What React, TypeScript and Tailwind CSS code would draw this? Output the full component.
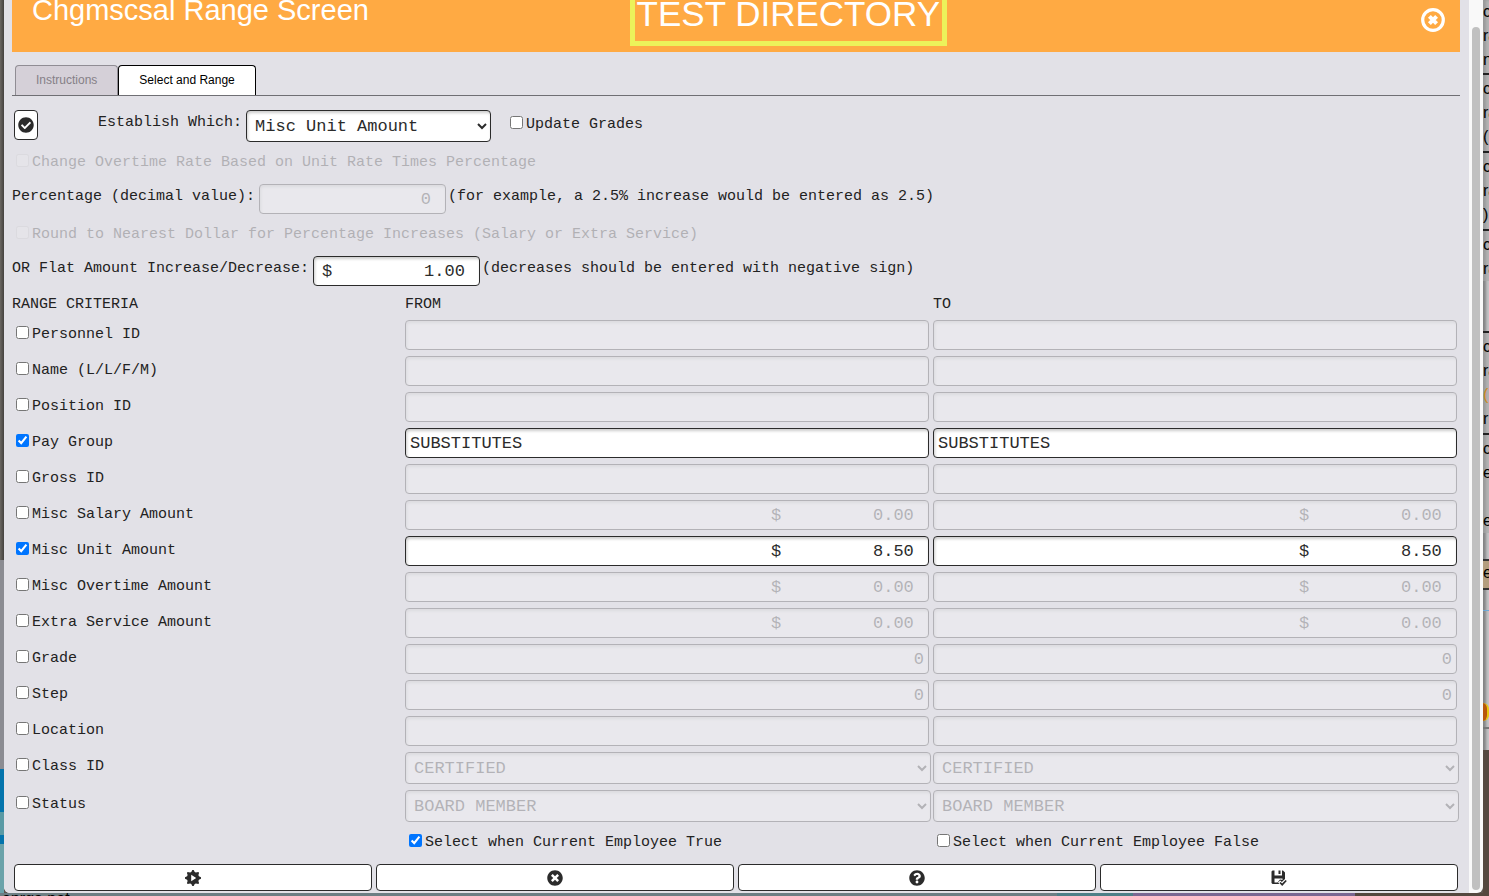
import { useState } from 'react'
import { FaCheckCircle, FaQuestionCircle, FaTimesCircle } from 'react-icons/fa'

type Criterion = {
  id: string
  label: string
  kind: 'text' | 'number' | 'select'
  value: string
  on?: boolean
}

const criteria: Criterion[] = [
  { id: 'personnel', label: 'Personnel ID', kind: 'text', value: '' },
  { id: 'name', label: 'Name (L/L/F/M)', kind: 'text', value: '' },
  { id: 'position', label: 'Position ID', kind: 'text', value: '' },
  { id: 'paygroup', label: 'Pay Group', kind: 'text', value: 'SUBSTITUTES', on: true },
  { id: 'gross', label: 'Gross ID', kind: 'text', value: '' },
  { id: 'salary', label: 'Misc Salary Amount', kind: 'number', value: '$         0.00 ' },
  { id: 'unit', label: 'Misc Unit Amount', kind: 'number', value: '$         8.50 ', on: true },
  { id: 'overtime', label: 'Misc Overtime Amount', kind: 'number', value: '$         0.00 ' },
  { id: 'extra', label: 'Extra Service Amount', kind: 'number', value: '$         0.00 ' },
  { id: 'grade', label: 'Grade', kind: 'number', value: '0' },
  { id: 'step', label: 'Step', kind: 'number', value: '0' },
  { id: 'location', label: 'Location', kind: 'text', value: '' },
  { id: 'class', label: 'Class ID', kind: 'select', value: 'CERTIFIED' },
  { id: 'status', label: 'Status', kind: 'select', value: 'BOARD MEMBER' },
]

const field =
  'block rounded border border-[#2b2b2b] bg-white px-1 text-[17px] text-[#2b2b2b] shadow-[inset_1px_2px_3px_rgba(0,0,0,0.2)] disabled:opacity-25'

function Check({ label, checked = false, disabled = false }: { label: string; checked?: boolean; disabled?: boolean }) {
  return (
    <label className={`flex items-start leading-[30px] ${disabled ? 'opacity-25' : ''}`}>
      <input type="checkbox" defaultChecked={checked} disabled={disabled} className="mt-1.5 mr-[3px] ml-1 size-[13px]" />
      {label}
    </label>
  )
}

function RangeField({ item, side, enabled }: { item: Criterion; side: string; enabled: boolean }) {
  const name = `${item.label} ${side}`

  if (item.kind === 'select') {
    return (
      <div className="pr-0.5">
        <select aria-label={name} disabled={!enabled} className={`${field} h-8 w-full`}>
          <option>{item.value}</option>
        </select>
      </div>
    )
  }

  return (
    <div className="pr-1">
      <input
        type="text"
        aria-label={name}
        defaultValue={item.value}
        disabled={!enabled}
        className={`${field} h-[30px] w-full ${item.kind === 'number' ? 'text-right' : 'text-left'}`}
      />
    </div>
  )
}

function CriterionRow({ item }: { item: Criterion }) {
  const [on, setOn] = useState(!!item.on)

  return (
    <tr className={item.kind === 'select' ? 'h-[38px]' : 'h-9'}>
      <td className="align-top">
        <label className="flex items-start leading-[30px]">
          <input
            type="checkbox"
            checked={on}
            onChange={(e) => setOn(e.target.checked)}
            className="mt-1.5 mr-[3px] ml-1 size-[13px]"
          />
          {item.label}
        </label>
      </td>
      <td className="align-top">
        <RangeField item={item} side="from" enabled={on} />
      </td>
      <td className="align-top">
        <RangeField item={item} side="to" enabled={on} />
      </td>
    </tr>
  )
}

function CloseIcon() {
  return (
    <svg viewBox="0 0 24 24" className="size-6" fill="none" stroke="currentColor">
      <circle cx="12" cy="12" r="10.3" strokeWidth="3.2" />
      <path d="M8.4 8.4l7.2 7.2M15.6 8.4l-7.2 7.2" strokeWidth="4" />
    </svg>
  )
}

function GearPlayIcon() {
  return (
    <svg viewBox="0 0 16 16" className="size-4" fill="currentColor">
      <path
        fillRule="evenodd"
        d="M7.300 0h1.400l1 2.100 1.200.5 2.300-.7.900.9-.7 2.300.5 1.200L16 7.300v1.400l-2.100 1-.5 1.200.7 2.300-.9.900-2.300-.7-1.200.5L8.700 16H7.300l-1-2.100-1.200-.5-2.300.7-.9-.9.7-2.300-.5-1.200L0 8.700V7.300l2.100-1 .5-1.200-.7-2.300.9-.9 2.300.7 1.200-.5zM6.200 4.800v6.400l5-3.200z"
      />
    </svg>
  )
}

function SaveCheckIcon() {
  return (
    <svg viewBox="0 0 16 16" className="size-4" fill="currentColor">
      <path
        fillRule="evenodd"
        d="M1.500 .5H3.500V5.500H11V.5h1L14 2.500V9l-3.200 3-1.600-1.500L7 12.500 8.500 14H1.500L.5 13V1.500zM3.500 8.500V12.500H6.500L9 9.500 11.500 10V8.500z"
      />
      <path d="M7.500 .5h2v3.500h-2z" />
      <path d="M9 12.500l2.200 2.200 4-4.200" fill="none" stroke="currentColor" strokeWidth="1.700" />
    </svg>
  )
}

const actions = [
  { name: 'Run', icon: <GearPlayIcon /> },
  { name: 'Cancel', icon: <FaTimesCircle className="size-4" /> },
  { name: 'Help', icon: <FaQuestionCircle className="size-4" /> },
  { name: 'Save', icon: <SaveCheckIcon /> },
]

// slice of the page behind the dialog, visible past its right edge
function BackdropRight() {
  return (
    <div className="flex w-1.5 flex-col overflow-hidden bg-[#c6c6c8] text-base leading-6 whitespace-nowrap text-black shadow-[inset_3px_0_3px_rgba(0,0,0,0.35)]">
      <div className="h-[75px] shrink-0 border-b-2 border-[#222] bg-[#a8a8a8]/60">
        <div>c</div>
        <div>ra</div>
        <div>n</div>
      </div>
      <div className="h-[78px] shrink-0 border-b-2 border-[#222] bg-[#a8a8a8]/60 pt-0.5">
        <div>c</div>
        <div>ra</div>
        <div>(</div>
      </div>
      <div className="h-[78px] shrink-0 border-b-2 border-[#222] bg-[#a8a8a8]/60 pt-0.5">
        <div>c</div>
        <div>ra</div>
        <div>)</div>
      </div>
      <div className="h-[50px] shrink-0 bg-[#a8a8a8]/60 pt-0.5">
        <div>c</div>
        <div>ra</div>
      </div>
      <div className="h-[52px] shrink-0 border-b-2 border-[#222]" />
      <div className="h-[102px] shrink-0 border-b-2 border-[#222] bg-[#a8a8a8]/60 pt-0.5">
        <div>c</div>
        <div>ra</div>
        <div className="text-[#d08a20]">(</div>
        <div>r</div>
      </div>
      <div className="h-[98px] shrink-0 bg-[#a8a8a8]/60 pt-0.5">
        <div>c</div>
        <div>e</div>
        <div className="h-6" />
        <div>e</div>
      </div>
      <div className="h-[26px] shrink-0" />
      <div className="h-[31px] shrink-0 border-y-2 border-[#333] bg-[#b39d7e]">e</div>
      <div className="h-[21px] shrink-0 border-b border-[#6fa8d6]" />
      <div className="h-[92px] shrink-0" />
      <div className="h-[18px] shrink-0 rounded-r-full border-r-2 border-[#e8c810] bg-[#b8560c]" />
      <div className="h-[8px] shrink-0 border-b-2 border-[#777]" />
      <div className="h-[21px] shrink-0" />
      <div className="grow bg-[#54483f]" />
    </div>
  )
}

export default function App() {
  const [tab, setTab] = useState('range')

  return (
    <div className="flex h-screen flex-col overflow-hidden bg-[#5d564f] font-['Liberation_Sans',Arial,sans-serif]">
      <div className="flex h-[893px] shrink-0">
        <div className="flex w-1 flex-col bg-linear-to-r from-[#6b6762] to-[#45423f]">
          <div className="h-[560px]" />
          <div className="h-[209px] bg-[#8b8c92]" />
          <div className="h-[43px] bg-[#0474ac]" />
          <div className="h-[23px] bg-[#5a9aa5]" />
          <div className="h-[9px] bg-[#0474ac]" />
          <div className="grow bg-[#6ba3aa]" />
        </div>

        <div className="flex min-w-0 flex-1 overflow-hidden rounded-b-md bg-[#f9f9f9]">
          <main className="min-w-0 flex-1 bg-[#e2e1e7] pl-2 font-['Liberation_Mono',monospace] text-[15px] text-[#222]">
            <header className="-mt-8 mr-[9px] grid h-[84px] grid-cols-[6fr_auto_5fr] items-start bg-[#ffaa43] pt-4 pr-[15px] pl-5 font-['Liberation_Sans',Arial,sans-serif] text-white">
              <h1 className="text-[29px] leading-[52px]">Chgmscsal Range Screen</h1>
              <div className="border-5 border-[#ecf25a] px-0.5 pb-0.5 text-[35px] leading-[50px]">TEST DIRECTORY</div>
              <button type="button" aria-label="Close" className="mt-6 justify-self-end">
                <CloseIcon />
              </button>
            </header>

            <div
              role="tablist"
              className="mt-[13px] mr-[9px] flex border-b border-[#6f6f74] pl-[3px] font-['Liberation_Sans',Arial,sans-serif] text-xs"
            >
              {[
                ['info', 'Instructions'],
                ['range', 'Select and Range'],
              ].map(([id, name]) => (
                <button
                  key={id}
                  type="button"
                  role="tab"
                  aria-selected={tab === id}
                  onClick={() => setTab(id)}
                  className={`h-[30px] rounded-t border border-b-0 px-5 pb-0.5 ${
                    tab === id ? 'border-black bg-white text-black' : 'border-[#908d94] bg-[#d5d0d8] text-[#858087]'
                  }`}
                >
                  {name}
                </button>
              ))}
            </div>

            <form className="mt-3.5 mr-2" onSubmit={(e) => e.preventDefault()}>
              <div className="flex h-[38px] items-start pl-0.5">
                <button
                  type="button"
                  aria-label="Confirm"
                  className="flex h-[30px] w-6 items-center justify-center rounded border border-[#2b2b2b] bg-white text-[#2b2b2b]"
                >
                  <FaCheckCircle className="size-4" />
                </button>
                <label htmlFor="which" className="mr-1 ml-[60px] leading-[26px]">
                  Establish Which:
                </label>
                <select id="which" className={`${field} mr-[15px] h-8 w-[245px]`}>
                  <option>Misc Unit Amount</option>
                </select>
                <Check label="Update Grades" />
              </div>

              <div className="h-9">
                <Check label="Change Overtime Rate Based on Unit Rate Times Percentage" disabled />
              </div>

              <div className="flex h-9 items-start leading-[26px]">
                <label htmlFor="percent" className="mr-1">
                  Percentage (decimal value):
                </label>
                <input
                  id="percent"
                  type="text"
                  defaultValue="0 "
                  disabled
                  className={`${field} mr-0.5 h-[30px] w-[187px] text-right`}
                />
                <span>(for example, a 2.5% increase would be entered as 2.5)</span>
              </div>

              <div className="h-9">
                <Check label="Round to Nearest Dollar for Percentage Increases (Salary or Extra Service)" disabled />
              </div>

              <div className="flex h-9 items-start leading-[26px]">
                <label htmlFor="flat" className="mr-1">
                  OR Flat Amount Increase/Decrease:
                </label>
                <input
                  id="flat"
                  type="text"
                  defaultValue="$         1.00 "
                  className={`${field} mr-0.5 h-[30px] w-[167px] text-right`}
                />
                <span>(decreases should be entered with negative sign)</span>
              </div>

              <table className="w-full table-fixed">
                <colgroup>
                  <col className="w-[393px]" />
                  <col />
                  <col />
                </colgroup>
                <thead>
                  <tr className="h-7 text-left align-top leading-[26px]">
                    <th className="font-normal">RANGE CRITERIA</th>
                    <th className="font-normal">FROM</th>
                    <th className="font-normal">TO</th>
                  </tr>
                </thead>
                <tbody>
                  {criteria.map((item) => (
                    <CriterionRow key={item.id} item={item} />
                  ))}
                  <tr className="h-9 align-top">
                    <td />
                    <td>
                      <Check label="Select when Current Employee True" checked />
                    </td>
                    <td>
                      <Check label="Select when Current Employee False" />
                    </td>
                  </tr>
                </tbody>
              </table>

              <div className="mr-[3px] ml-0.5 grid grid-cols-4 gap-1">
                {actions.map((action) => (
                  <button
                    key={action.name}
                    type="button"
                    aria-label={action.name}
                    className="flex h-[27px] items-center justify-center rounded border border-[#2b2b2b] bg-white text-[#2b2b2b]"
                  >
                    {action.icon}
                  </button>
                ))}
              </div>
            </form>
          </main>

          {/* scrollbar */}
          <div className="flex w-3.5 flex-col px-[3px] pt-[27px] pb-[3px]">
            <div className="flex-1 rounded-full bg-[#c0c0c0]" />
          </div>
        </div>

        <BackdropRight />
      </div>

      <div className="flex h-[3px] overflow-hidden text-base leading-3 text-black">
        <div className="flex-1 bg-[#6c7e83] pl-0.5">enrga.net</div>
        <div className="w-[76px] bg-[#4e7f87]" />
        <div className="w-[222px] bg-[#7b6791]" />
        <div className="w-[134px] bg-[#54483f]" />
      </div>
    </div>
  )
}
